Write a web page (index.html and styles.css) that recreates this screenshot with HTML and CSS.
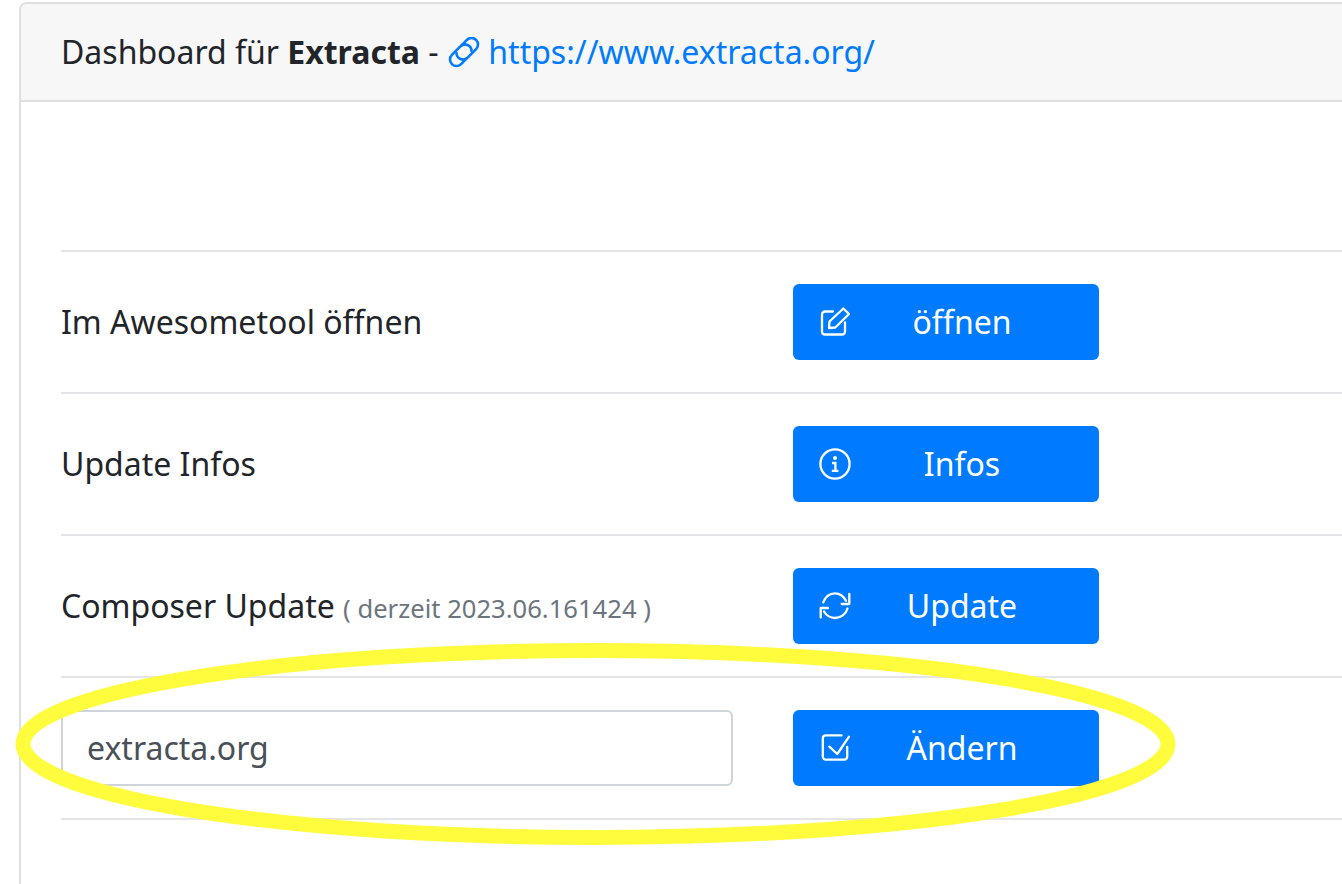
FILE: index.html
```html
<!DOCTYPE html>
<html lang="de">
<head>
  <meta charset="UTF-8">
  <meta name="viewport" content="width=device-width, initial-scale=1.0">
  <title>Dashboard</title>
  <link rel="stylesheet" href="styles.css">
</head>
<body>

  <div class="card">
    <div class="card-header">
      Dashboard für <strong>Extracta</strong> -
      <a href="#"><svg class="link-icon" viewBox="-2 0 33 32" fill="none" stroke="currentColor" stroke-width="2.6" stroke-linecap="round">
          <path d="M12.500 8.300 L17.900 2.900 A6.500 6.500 0 0 1 27.100 12.100 L18.600 20.600 A6.500 6.500 0 0 1 7.500 16"/>
          <path d="M17.500 21.700 L12.100 27.100 A6.500 6.500 0 0 1 2.900 17.900 L11.400 9.400 A6.500 6.500 0 0 1 22.500 14"/>
        </svg> https://www.extracta.org/</a>
    </div>

    <div class="card-body">
      <div class="rows">
        <div class="row">
          <div class="row-label">Im Awesometool öffnen</div>
          <a class="btn" href="#">
            <svg class="btn-icon" viewBox="0 0 32 32" fill="none" stroke="currentColor" stroke-width="2.3" stroke-linecap="round" stroke-linejoin="round">
              <path d="M14 5.500 H6 C4.300 5.500 3 6.800 3 8.500 V25.500 C3 27.200 4.300 28.500 6 28.500 H23 C24.700 28.500 26 27.200 26 25.500 V16.500"/>
              <path d="M10.500 15.500 L24.300 2.500 L30 8 L16.300 21.500 L10 22 Z"/>
            </svg>
            <span>öffnen</span>
          </a>
        </div>

        <div class="row">
          <div class="row-label">Update Infos</div>
          <a class="btn" href="#">
            <svg class="btn-icon" viewBox="0 0 32 32" fill="none" stroke="currentColor" stroke-width="2.3">
              <circle cx="16" cy="16" r="14.600"/>
              <circle cx="16" cy="10" r="2" fill="currentColor" stroke="none"/>
              <path d="M13 15 H16.400 V22.500 M12.800 22.800 H19.400"/>
            </svg>
            <span>Infos</span>
          </a>
        </div>

        <div class="row">
          <div class="row-label">Composer Update <small>( derzeit 2023.06.161424 )</small></div>
          <a class="btn" href="#">
            <svg class="btn-icon" viewBox="0 0 32 32" fill="none" stroke="currentColor" stroke-width="2.3" stroke-linecap="round" stroke-linejoin="round">
              <path d="M4.300 12.300 C5.800 7 10.500 3.300 16 3.300 C20.500 3.300 24.500 6 27 10.700"/>
              <path d="M28.500 18.500 C27 24 21.500 28 16 28 C11.500 28 7.500 25.500 5 21.500"/>
              <path d="M30.300 4 V14 H22.700"/>
              <path d="M1.700 27.500 V18 H9"/>
            </svg>
            <span>Update</span>
          </a>
        </div>

        <div class="row">
          <input class="row-input" type="text" value="extracta.org">
          <a class="btn" href="#">
            <svg class="btn-icon" viewBox="0 0 32 32" fill="none" stroke="currentColor" stroke-width="2.3" stroke-linecap="round" stroke-linejoin="round">
              <path d="M28.200 15 V24.600 C28.200 26.300 26.900 27.600 25.200 27.600 H6.800 C5.100 27.600 3.800 26.300 3.800 24.600 V6.400 C3.800 4.700 5.100 3.400 6.800 3.400 H22.500"/>
              <path d="M10.300 14.700 L18.300 22 L30 4.700"/>
            </svg>
            <span>Ändern</span>
          </a>
        </div>
      </div>
    </div>
  </div>

  <!-- Yellow marker round the last row -->
  <svg class="marker" viewBox="0 0 1342 884" fill="none">
    <ellipse cx="595.500" cy="744" rx="572.500" ry="93.500" stroke="#fffc3d" stroke-width="15"/>
  </svg>

</body>
</html>
```

FILE: styles.css
```css
body {
  font-family: 'Noto Sans', sans-serif;
  font-size: 32px;
  line-height: 48px;
  color: #212529;
  background-color: #fff;
  margin: 0;
  height: 884px;
  overflow: hidden;
  position: relative;
}

.card {
  margin: 2px 0 0 19px;
  height: 882px;
  border: 2px solid #dfdfdf;
  border-right: none;
  border-bottom: none;
  border-radius: 8px 0 0 0;
  box-sizing: border-box;
  background-color: #fff;
}

.card-header {
  height: 96px;
  line-height: 96px;
  padding: 0 40px;
  background-color: #f7f7f7;
  border-bottom: 2px solid #dfdfdf;
  border-radius: 6px 0 0 0;
}

.card-header a {
  color: #007bff;
  text-decoration: none;
}

.link-icon {
  width: 33px;
  height: 32px;
  vertical-align: -5px;
}

.card-body {
  padding: 148px 0 0 40px;
}

.rows {
  border-top: 2px solid #e4e5e7;
}

.row {
  display: flex;
  align-items: center;
  gap: 60px;
  height: 76px;
  padding: 32px 0;
  border-bottom: 2px solid #e4e5e7;
}

.row-label {
  width: 672px;
  flex-shrink: 0;
}

.row-label small {
  font-size: 25.6px;
  line-height: 1;
  color: #6c757d;
}

.row-input {
  width: 672px;
  height: 76px;
  flex-shrink: 0;
  box-sizing: border-box;
  padding: 0 24px 2px;
  border: 2px solid #ced4da;
  border-radius: 6px;
  font-family: inherit;
  font-size: 32px;
  color: #495057;
  outline: none;
}

.btn {
  width: 306px;
  height: 76px;
  flex-shrink: 0;
  box-sizing: border-box;
  padding: 0 26px;
  display: flex;
  align-items: center;
  color: #fff;
  background-color: #007bff;
  border-radius: 6px;
  text-decoration: none;
}

.btn span {
  flex: 1;
  text-align: center;
}

.btn-icon {
  width: 32px;
  height: 32px;
}

.marker {
  position: absolute;
  left: 0;
  top: 0;
  width: 1342px;
  height: 884px;
  pointer-events: none;
}
```
